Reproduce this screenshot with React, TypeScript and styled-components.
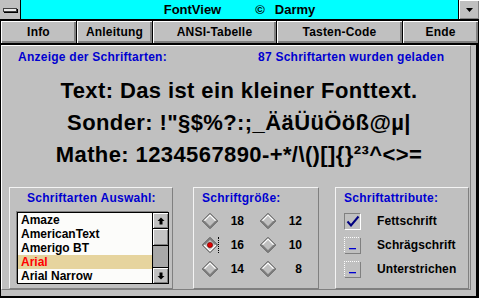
import styled, { createGlobalStyle } from 'styled-components';

// ─── Global ──────────────────────────────────────────────────────────────────

const GlobalStyle = createGlobalStyle`
  html, body {
    margin: 0;
    padding: 0;
    background: #c0c0c0;
  }
  body {
    font-family: "Liberation Sans", Arial, sans-serif;
  }
  * {
    box-sizing: border-box;
  }
`;

const BLUE = '#0000d0';

// ─── Window frame ────────────────────────────────────────────────────────────

const Window = styled.div`
  width: 479px;
  height: 298px;
  display: flex;
  flex-direction: column;
  background: #c0c0c0;
  overflow: hidden;
`;

const TitleBar = styled.div`
  display: flex;
  height: 21px;
  flex-shrink: 0;
  border-bottom: 2px solid #000;
`;

const SysMenu = styled.div`
  width: 21px;
  border-right: 1px solid #000;
  background: #c0c0c0;
  display: flex;
  align-items: center;
  justify-content: center;
`;

const SysDash = styled.div`
  width: 14px;
  height: 4px;
  background: #e8e8e8;
  border: 1px solid #404040;
  box-shadow: 1px 1px 0 #000;
`;

const Caption = styled.div`
  flex: 1;
  display: flex;
  align-items: center;
  justify-content: center;
  background-color: #00ffff;
  background-image: radial-gradient(#00b8b8 0.6px, transparent 0.7px);
  background-size: 4px 4px;
  font-size: 13px;
  font-weight: 700;
  color: #000;
  line-height: 19px;
`;

const CaptionWord = styled.span<{ $gap?: number }>`
  margin-left: ${({ $gap }) => $gap ?? 0}px;
`;

const MinButton = styled.div`
  width: 21px;
  border-left: 1px solid #000;
  background: #c0c0c0;
  box-shadow: inset 1px 1px #fff, inset -1px -1px #808080;
  display: flex;
  align-items: center;
  justify-content: center;
`;

// ─── Button bar ──────────────────────────────────────────────────────────────

const ButtonBar = styled.div`
  display: flex;
  height: 24px;
  flex-shrink: 0;
  border-bottom: 1px solid #000;
`;

const BarButton = styled.div<{ $w: number }>`
  width: ${({ $w }) => $w}px;
  height: 23px;
  margin-left: -1px;
  border: 1px solid #000;
  border-top: none;
  background: #c0c0c0;
  box-shadow: inset 1px 1px #fff, inset -2px -2px #808080;
  display: flex;
  align-items: center;
  justify-content: center;
  font-size: 12px;
  font-weight: 700;
  letter-spacing: 0.2px;
  color: #000;

  &:first-child {
    margin-left: 0;
  }
`;

// ─── Body ────────────────────────────────────────────────────────────────────

const Body = styled.div`
  flex: 1;
  display: flex;
  border-left: 1px solid #000;
  border-right: 3px solid #000;
  border-bottom: 2px solid #000;
`;

const Panel = styled.div`
  flex: 1;
  margin: 0 5px 6px 0;
  border-top: 1px solid #fff;
  border-left: 1px solid #fff;
  border-right: 1px solid #808080;
  border-bottom: 1px solid #808080;
  display: flex;
  flex-direction: column;
`;

const InfoRow = styled.div`
  margin-top: 4px;
  padding-left: 16px;
  display: grid;
  grid-template-columns: 240px 1fr;
  font-size: 12px;
  font-weight: 700;
  letter-spacing: 0.25px;
  line-height: 14px;
  color: ${BLUE};
`;

const Preview = styled.div`
  margin-top: 11px;
  padding-left: 6px;
  text-align: center;
  font-size: 22px;
  font-weight: 700;
  letter-spacing: 0.4px;
  line-height: 32px;
  color: #000;
  white-space: nowrap;
`;

const GroupRow = styled.div`
  margin-top: 16px;
  padding-left: 7px;
  display: flex;
  height: 102px;
`;

const GroupBox = styled.div<{ $w: number; $mr?: number }>`
  width: ${({ $w }) => $w}px;
  margin-right: ${({ $mr }) => $mr ?? 0}px;
  border-top: 1px solid #f4f4f4;
  border-left: 1px solid #f4f4f4;
  border-right: 1px solid #808080;
  border-bottom: 1px solid #808080;
  padding-top: 3px;
  display: flex;
  flex-direction: column;
`;

const GroupTitle = styled.div<{ $pl: number }>`
  padding-left: ${({ $pl }) => $pl}px;
  font-size: 12px;
  font-weight: 700;
  letter-spacing: 0.25px;
  line-height: 14px;
  color: ${BLUE};
`;

// ─── List box ────────────────────────────────────────────────────────────────

const ListBox = styled.div`
  margin: 7px 0 0 7px;
  width: 152px;
  height: 72px;
  border: 1px solid #000;
  box-shadow: -1px -1px 0 #808080;
  display: flex;
`;

const ListItems = styled.div`
  flex: 1;
  background: #fcfcfa;
  display: flex;
  flex-direction: column;
`;

const ListItem = styled.div<{ $selected?: boolean }>`
  height: 14px;
  padding-left: 3px;
  font-size: 12px;
  font-weight: 700;
  line-height: 14px;
  color: ${({ $selected }) => ($selected ? '#ff0000' : '#000')};
  background: ${({ $selected }) => ($selected ? '#e6d49e' : 'transparent')};
  white-space: nowrap;
`;

const ScrollBar = styled.div`
  width: 16px;
  border-left: 1px solid #000;
  display: flex;
  flex-direction: column;
  background: #a8a8a8;
`;

const ScrollButton = styled.div<{ $bottom?: boolean }>`
  height: 16px;
  flex-shrink: 0;
  background: #c0c0c0;
  box-shadow: inset 1px 1px #fff, inset -1px -1px #808080;
  ${({ $bottom }) => ($bottom ? 'border-top: 1px solid #000;' : 'border-bottom: 1px solid #000;')}
  display: flex;
  align-items: center;
  justify-content: center;
`;

const ScrollThumb = styled.div`
  height: 17px;
  flex-shrink: 0;
  background: #c4c4c4;
  box-shadow: inset 1px 1px #fff, inset -1px -1px #808080;
  border-bottom: 1px solid #000;
`;

const ScrollTrack = styled.div`
  flex: 1;
`;

// ─── Radio diamonds ──────────────────────────────────────────────────────────

const RadioRows = styled.div`
  margin-top: 4px;
  padding-left: 8px;
  display: flex;
  flex-direction: column;
`;

const RadioRow = styled.div`
  height: 24px;
  display: flex;
  align-items: center;
  gap: 16px;
`;

const RadioOption = styled.div`
  display: flex;
  align-items: center;
  gap: 11px;
`;

const DiamondWrap = styled.div<{ $focus?: boolean }>`
  width: 16px;
  height: 16px;
  position: relative;

  &::after {
    content: '';
    display: ${({ $focus }) => ($focus ? 'block' : 'none')};
    position: absolute;
    right: -1px;
    top: 0;
    height: 16px;
    border-right: 1px dotted #000;
  }
`;

const RadioLabel = styled.span`
  width: 15px;
  text-align: right;
  font-size: 12px;
  font-weight: 700;
  line-height: 14px;
  color: #000;
`;

// ─── Check boxes ─────────────────────────────────────────────────────────────

const CheckRows = styled.div`
  margin-top: 4px;
  padding-left: 8px;
  display: flex;
  flex-direction: column;
`;

const CheckRow = styled.div`
  height: 24px;
  display: flex;
  align-items: center;
  gap: 16px;
`;

const CheckBox = styled.div<{ $checked?: boolean }>`
  width: 17px;
  height: 17px;
  background: #c0c0c0;
  border-top: 1px ${({ $checked }) => ($checked ? 'solid #808080' : 'dotted #fff')};
  border-left: 1px ${({ $checked }) => ($checked ? 'solid #808080' : 'dotted #fff')};
  border-right: 1px solid ${({ $checked }) => ($checked ? '#fff' : '#808080')};
  border-bottom: 1px solid ${({ $checked }) => ($checked ? '#fff' : '#808080')};
  display: flex;
  align-items: center;
  justify-content: center;
`;

const CheckLabel = styled.span`
  font-size: 12px;
  font-weight: 700;
  letter-spacing: 0.1px;
  line-height: 14px;
  color: #000;
`;

// ─── Drawings ────────────────────────────────────────────────────────────────

function Diamond({ selected }: { selected?: boolean }) {
  return (
    <svg width="16" height="16" viewBox="0 0 16 16">
      <polygon points="8,0.5 15.5,8 8,15.5 0.5,8" fill="#c0c0c0" stroke="#303030" strokeWidth="1" />
      <polyline
        points="2,8 8,2 14,8"
        fill="none"
        stroke={selected ? '#808080' : '#fff'}
        strokeWidth="1.2"
      />
      <polyline
        points="2,8 8,14 14,8"
        fill="none"
        stroke={selected ? '#fff' : '#808080'}
        strokeWidth="1.2"
      />
      {selected && <circle cx="8" cy="8" r="2.6" fill="#e00000" stroke="#600000" strokeWidth="0.6" />}
    </svg>
  );
}

function Arrow({ down }: { down?: boolean }) {
  return (
    <svg width="8" height="8" viewBox="0 0 8 8" style={down ? { transform: 'rotate(180deg)' } : undefined}>
      <polygon points="4,0.5 7.5,4 0.5,4" fill="#000" />
      <rect x="2.5" y="4" width="3" height="3.5" fill="#000" />
    </svg>
  );
}

function CheckMark() {
  return (
    <svg width="14" height="12" viewBox="0 0 14 12">
      <path d="M1.5 6.5 L5 10.5 L12.5 1.5" fill="none" stroke="#000080" strokeWidth="2" />
    </svg>
  );
}

function Dash() {
  return (
    <svg width="9" height="14" viewBox="0 0 9 14">
      <rect x="1" y="10" width="7" height="1.3" fill={BLUE} />
    </svg>
  );
}

// ─── Data ────────────────────────────────────────────────────────────────────

const buttons = [
  { label: 'Info', w: 77 },
  { label: 'Anleitung', w: 77 },
  { label: 'ANSI-Tabelle', w: 125 },
  { label: 'Tasten-Code', w: 127 },
  { label: 'Ende', w: 77 },
];

const fonts = ['Amaze', 'AmericanText', 'Amerigo BT', 'Arial', 'Arial Narrow'];

const sizes: [string, string][] = [
  ['18', '12'],
  ['16', '10'],
  ['14', '8'],
];

const attributes = [
  { label: 'Fettschrift', checked: true },
  { label: 'Schrägschrift', checked: false },
  { label: 'Unterstrichen', checked: false },
];

// ─── Component ───────────────────────────────────────────────────────────────

export default function App() {
  return (
    <>
      <GlobalStyle />
      <Window>
        <TitleBar>
          <SysMenu>
            <SysDash />
          </SysMenu>
          <Caption>
            <CaptionWord>FontView</CaptionWord>
            <CaptionWord $gap={34}>©</CaptionWord>
            <CaptionWord $gap={10}>Darmy</CaptionWord>
          </Caption>
          <MinButton>
            <svg width="7" height="4" viewBox="0 0 7 4">
              <polygon points="0,0 7,0 3.5,4" fill="#000" />
            </svg>
          </MinButton>
        </TitleBar>

        <ButtonBar>
          {buttons.map((b) => (
            <BarButton key={b.label} $w={b.w}>
              {b.label}
            </BarButton>
          ))}
        </ButtonBar>

        <Body>
          <Panel>
            <InfoRow>
              <span>Anzeige der Schriftarten:</span>
              <span>87 Schriftarten wurden geladen</span>
            </InfoRow>

            <Preview>
              <div>Text: Das ist ein kleiner Fonttext.</div>
              <div>Sonder: !"§$%?:;_ÄäÜüÖöß@µ|</div>
              <div>Mathe: 1234567890-+*/\()[]{'{}'}²³^&lt;&gt;=</div>
            </Preview>

            <GroupRow>
              <GroupBox $w={164} $mr={20}>
                <GroupTitle $pl={17}>Schriftarten Auswahl:</GroupTitle>
                <ListBox>
                  <ListItems>
                    {fonts.map((f) => (
                      <ListItem key={f} $selected={f === 'Arial'}>
                        {f}
                      </ListItem>
                    ))}
                  </ListItems>
                  <ScrollBar>
                    <ScrollButton>
                      <Arrow />
                    </ScrollButton>
                    <ScrollThumb />
                    <ScrollTrack />
                    <ScrollButton $bottom>
                      <Arrow down />
                    </ScrollButton>
                  </ScrollBar>
                </ListBox>
              </GroupBox>

              <GroupBox $w={126} $mr={16}>
                <GroupTitle $pl={8}>Schriftgröße:</GroupTitle>
                <RadioRows>
                  {sizes.map(([a, b]) => (
                    <RadioRow key={a}>
                      <RadioOption>
                        <DiamondWrap $focus={a === '16'}>
                          <Diamond selected={a === '16'} />
                        </DiamondWrap>
                        <RadioLabel>{a}</RadioLabel>
                      </RadioOption>
                      <RadioOption>
                        <DiamondWrap>
                          <Diamond />
                        </DiamondWrap>
                        <RadioLabel>{b}</RadioLabel>
                      </RadioOption>
                    </RadioRow>
                  ))}
                </RadioRows>
              </GroupBox>

              <GroupBox $w={134}>
                <GroupTitle $pl={8}>Schriftattribute:</GroupTitle>
                <CheckRows>
                  {attributes.map((a) => (
                    <CheckRow key={a.label}>
                      <CheckBox $checked={a.checked}>{a.checked ? <CheckMark /> : <Dash />}</CheckBox>
                      <CheckLabel>{a.label}</CheckLabel>
                    </CheckRow>
                  ))}
                </CheckRows>
              </GroupBox>
            </GroupRow>
          </Panel>
        </Body>
      </Window>
    </>
  );
}
